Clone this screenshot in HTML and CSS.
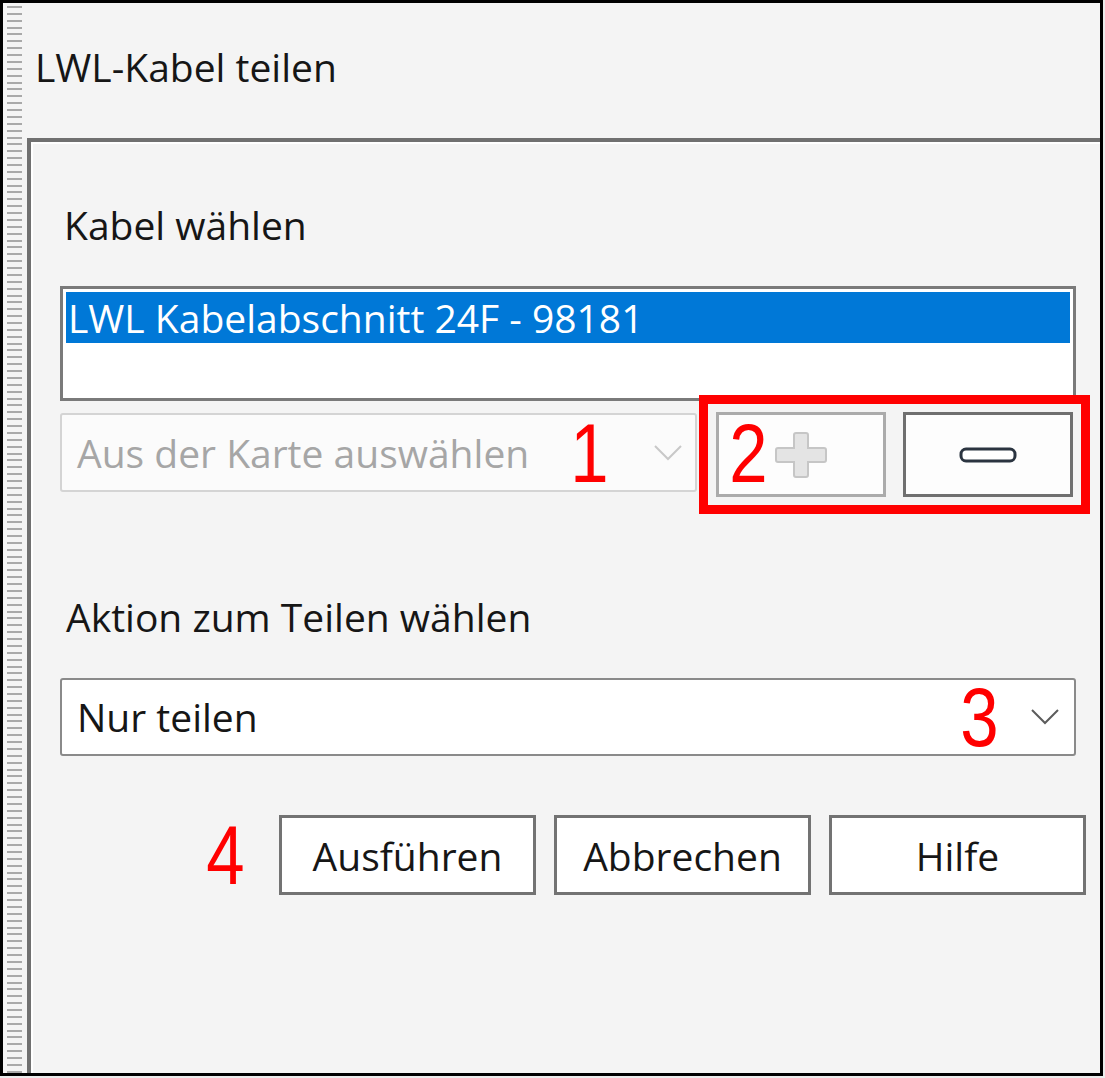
FILE: index.html
```html
<!DOCTYPE html>
<html>
<head>
  <title>LWL-Kabel teilen</title>
  <link rel="stylesheet" href="styles.css">
</head>
<body>

  <div class="window">
    <div class="grip"></div>

    <div class="main">
      <div class="title">LWL-Kabel teilen</div>

      <div class="panel">
        <div class="label">Kabel wählen</div>

        <div class="listbox">
          <div class="item selected">LWL Kabelabschnitt 24F - 98181</div>
        </div>

        <div class="pick-row">
          <div class="combo disabled">
            <span class="combo-text">Aus der Karte auswählen</span>
            <span class="mark mark-one">1</span>
            <svg class="chevron" width="28" height="16" viewBox="0 0 28 16">
              <polyline points="1,1 14,14 27,1" fill="none" stroke="#c8c8c8" stroke-width="2"/>
            </svg>
          </div>

          <div class="tool-group">
            <button class="tool disabled">
              <span class="mark mark-two">2</span>
              <svg width="52" height="46" viewBox="0 0 52 46">
                <path d="M19 3 Q19 1 21 1 H31 Q33 1 33 3 V16 H49 Q51 16 51 18 V28 Q51 30 49 30 H33 V43 Q33 45 31 45 H21 Q19 45 19 43 V30 H3 Q1 30 1 28 V18 Q1 16 3 16 H19 Z"
                      fill="#e4e4e4" stroke="#c6c6c6" stroke-width="2"/>
              </svg>
            </button>
            <button class="tool">
              <svg width="58" height="16" viewBox="0 0 58 16">
                <rect x="2" y="2" width="54" height="12" rx="5" fill="#ffffff" stroke="#2b3440" stroke-width="3"/>
              </svg>
            </button>
          </div>
        </div>

        <div class="label label-action">Aktion zum Teilen wählen</div>

        <div class="combo action-combo">
          <span class="combo-text">Nur teilen</span>
          <span class="mark mark-three">3</span>
          <svg class="chevron" width="28" height="16" viewBox="0 0 28 16">
            <polyline points="1,1 14,14 27,1" fill="none" stroke="#5c5c5c" stroke-width="2"/>
          </svg>
        </div>

        <div class="actions">
          <span class="mark mark-four">4</span>
          <button class="btn">Ausführen</button>
          <button class="btn">Abbrechen</button>
          <button class="btn">Hilfe</button>
        </div>
      </div>
    </div>
  </div>

</body>
</html>
```

FILE: styles.css
```css
body {
  margin: 0;
  background-color: #ececec;
  font-family: "Open Sans", "Noto Sans", sans-serif;
  font-size: 39px;
  color: #161616;
}

.window {
  box-sizing: border-box;
  width: 1103px;
  height: 1076px;
  border: 3px solid #000;
  background-color: #f4f4f4;
  display: flex;
}

/* dotted drag handle on the left edge */
.grip {
  width: 24px;
  flex-shrink: 0;
  background-image: repeating-linear-gradient(to bottom,
    transparent 0, transparent 3px,
    #a9a9a9 3px, #a9a9a9 5px,
    transparent 5px, transparent 6.87px);
  background-size: 15px 100%;
  background-position: 4px 0;
  background-repeat: no-repeat;
}

.main {
  flex: 1;
  display: flex;
  flex-direction: column;
}

.title {
  box-sizing: border-box;
  height: 135px;
  padding: 37px 0 0 8px;
  line-height: 53px;
}

.panel {
  flex: 1;
  border-top: 4px solid #707070;
  border-left: 4px solid #707070;
  box-shadow: inset 2px 2px 0 #ffffff;
  padding: 56px 24px 0 29px;
}

.label {
  line-height: 53px;
  padding-left: 4px;
  margin-bottom: 35px;
}

.label-action {
  margin-top: 93px;
  padding-left: 6px;
}

.listbox {
  box-sizing: border-box;
  height: 115px;
  border: 3px solid #7a7a7a;
  background-color: #fff;
  padding: 3px;
}

.item {
  height: 51px;
  line-height: 51px;
  padding-left: 2px;
}

.item.selected {
  background-color: #0078d7;
  color: #fff;
}

.pick-row {
  display: flex;
  align-items: flex-start;
  gap: 19px;
  margin-top: 11px;
}

.combo {
  box-sizing: border-box;
  display: flex;
  align-items: center;
  background-color: #fff;
  border: 2px solid #8a8a8a;
  border-radius: 3px;
  padding: 0 13px 0 15px;
}

.combo.disabled {
  flex: 1;
  height: 79px;
  margin-top: 1px;
  border-color: #d4d4d4;
  background-color: #fbfbfb;
  color: #a6a6a6;
}

.action-combo {
  height: 78px;
  padding-right: 15px;
}

.combo-text {
  flex: 1;
  line-height: 52px;
}

.chevron {
  flex-shrink: 0;
}

/* red annotation numbers */
.mark {
  display: inline-block;
  font-family: "Liberation Sans", Arial, sans-serif;
  font-size: 84px;
  line-height: 84px;
  color: #ff0000;
  transform: scaleX(0.82);
}

.mark-one {
  margin-right: 41px;
}

.mark-three {
  margin-right: 28px;
}

.tool-group {
  display: flex;
  gap: 17px;
  margin-right: 3px;
  outline: 9px solid #ff0000;
  outline-offset: 8px;
}

.tool {
  position: relative;
  box-sizing: border-box;
  width: 170px;
  height: 85px;
  display: flex;
  align-items: center;
  justify-content: center;
  background-color: #fdfdfd;
  border: 3px solid #6f6f6f;
  padding: 0;
}

.tool.disabled {
  border-color: #ababab;
}

.mark-two {
  position: absolute;
  left: 6px;
  top: -4px;
}

.actions {
  display: flex;
  justify-content: flex-end;
  align-items: center;
  gap: 18px;
  margin-top: 57px;
  margin-right: -10px;
}

.actions .mark {
  margin-right: 12px;
}

.btn {
  box-sizing: border-box;
  width: 257px;
  height: 80px;
  background-color: #fff;
  border: 3px solid #737373;
  font-family: "Open Sans", "Noto Sans", sans-serif;
  font-size: 39px;
  color: #161616;
  padding: 0;
}
```
